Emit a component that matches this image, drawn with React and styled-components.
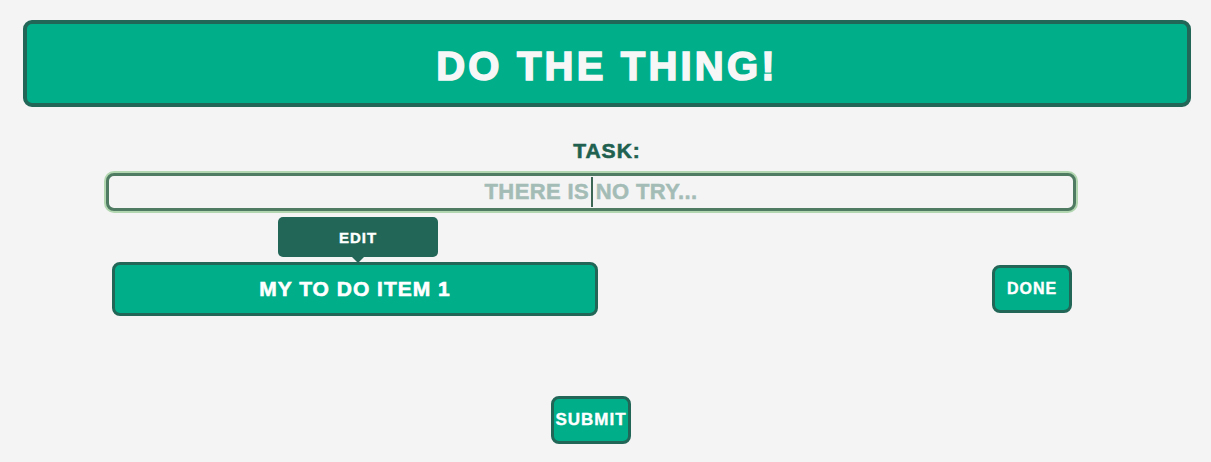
import styled, { createGlobalStyle } from "styled-components";

const GlobalStyle = createGlobalStyle`
  body {
    margin: 0;
    background: #f4f4f4;
    font-family: "Liberation Sans", Arial, sans-serif;
  }
`;

const Header = styled.h1`
  box-sizing: border-box;
  margin: 20px 20px 0 23px;
  height: 87px;
  padding-top: 5px;
  display: flex;
  align-items: center;
  justify-content: center;
  background: #00ae8a;
  border: 4px solid #216657;
  border-radius: 9px;
  color: #f7f7f7;
  font-size: 40px;
  font-weight: 700;
  letter-spacing: 3.2px;
  -webkit-text-stroke: 1.6px #f7f7f7;
`;

const Label = styled.label`
  display: block;
  margin: 32px 0 0 3px;
  text-align: center;
  color: #20604f;
  font-size: 21px;
  font-weight: 700;
  line-height: 24px;
  letter-spacing: 1px;
  -webkit-text-stroke: 0.6px #20604f;
`;

const Form = styled.form`
  width: 970px;
  margin-left: 106px;
  display: flex;
  flex-direction: column;
  align-items: center;
`;

const InputWrap = styled.div`
  position: relative;
  margin-top: 10px;
  width: 100%;

  &::after {
    content: "";
    position: absolute;
    top: 4px;
    left: 485px;
    width: 2px;
    height: 30px;
    background: #3e6655;
  }
`;

const Input = styled.input`
  box-sizing: border-box;
  display: block;
  width: 100%;
  height: 38px;
  border: 3px solid #4f7b62;
  border-radius: 8px;
  background: #f4f4f4;
  box-shadow: 0 0 0 2px #b2d7b0;
  outline: none;
  text-align: center;
  font-family: inherit;
  font-size: 22px;
  font-weight: 700;
  letter-spacing: 0.4px;
  color: #20604f;
  caret-color: transparent;

  &::placeholder {
    color: #a4bcb6;
    -webkit-text-stroke: 0.5px #a4bcb6;
  }
`;

const Row = styled.div`
  box-sizing: border-box;
  width: 100%;
  padding: 51px 4px 0 6px;
  display: flex;
  align-items: center;
  justify-content: space-between;
`;

const Item = styled.div`
  position: relative;
  box-sizing: border-box;
  width: 486px;
  height: 54px;
  display: flex;
  align-items: center;
  justify-content: center;
  background: #00ae8a;
  border: 3px solid #216657;
  border-radius: 8px;
  color: #fff;
  font-size: 21px;
  font-weight: 700;
  letter-spacing: 1px;
  -webkit-text-stroke: 0.6px #fff;
`;

const Tooltip = styled.div`
  position: absolute;
  top: -48px;
  left: 163px;
  width: 160px;
  height: 40px;
  display: flex;
  align-items: center;
  justify-content: center;
  background: #216657;
  border-radius: 5px;
  color: #fff;
  font-size: 15px;
  font-weight: 700;
  letter-spacing: 1px;
  -webkit-text-stroke: 0.4px #fff;

  &::after {
    content: "";
    position: absolute;
    bottom: -6px;
    left: 74px;
    border: 6px solid transparent;
    border-bottom: 0;
    border-top-color: #216657;
  }
`;

const Button = styled.button`
  box-sizing: border-box;
  width: 80px;
  height: 48px;
  margin-top: ${(p) => p.$top || "0"};
  background: #00ae8a;
  border: 3px solid #216657;
  border-radius: 8px;
  color: #fff;
  font-family: inherit;
  font-size: ${(p) => p.$size || "16px"};
  font-weight: 700;
  letter-spacing: 1px;
  -webkit-text-stroke: 0.4px #fff;
  padding: 0;
`;

export default function App() {
  return (
    <>
      <GlobalStyle />
      <Header>DO THE THING!</Header>
      <Label htmlFor="task">TASK:</Label>
      <Form onSubmit={(e) => e.preventDefault()}>
        <InputWrap>
          <Input id="task" placeholder="THERE IS NO TRY..." />
        </InputWrap>
        <Row>
          <Item>
            <Tooltip>EDIT</Tooltip>
            MY TO DO ITEM 1
          </Item>
          <Button type="button">DONE</Button>
        </Row>
        <Button type="submit" $top="80px" $size="17px">
          SUBMIT
        </Button>
      </Form>
    </>
  );
}
